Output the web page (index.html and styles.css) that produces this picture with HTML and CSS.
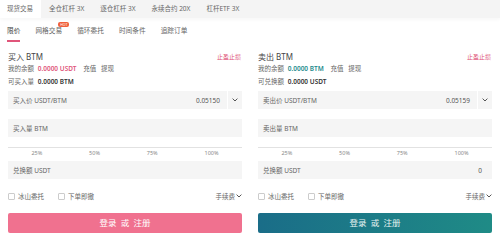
FILE: index.html
```html
<!DOCTYPE html>
<html>
<head>
    <meta charset="utf-8" />
    <title>现货交易</title>
    <link rel="stylesheet" href="styles.css">
</head>
<body>
    <div class="topnav">
        <span class="top_tab active">现货交易</span>
        <span class="top_tab">全仓杠杆 3X</span>
        <span class="top_tab">逐仓杠杆 3X</span>
        <span class="top_tab">永续合约 20X</span>
        <span class="top_tab">杠杆ETF 3X</span>
    </div>
    <div class="subnav">
        <span class="sub_tab active">限价</span>
        <span class="sub_tab">网格交易<i class="hot">HOT</i></span>
        <span class="sub_tab">循环委托</span>
        <span class="sub_tab">时间条件</span>
        <span class="sub_tab">追踪订单</span>
    </div>

    <div class="panels">
        <!-- 买入 -->
        <div class="panel buy">
            <div class="panel_head">
                <span class="title">买入 BTM</span>
                <span class="stop">止盈止损</span>
            </div>
            <div class="row">我的余额 <b class="amount">0.0000 USDT</b> <span class="link">充值</span> <span class="link">提现</span></div>
            <div class="row">可买入量 <b class="dark">0.0000 BTM</b></div>
            <div class="field first">
                <span class="label">买入价 USDT/BTM</span>
                <span class="value">0.05150</span>
                <span class="arrow"><svg width="6" height="4" viewBox="0 0 6 4"><path d="M0.6 0.6 L3 3 L5.4 0.6" fill="none" stroke="#555" stroke-width="1"/></svg></span>
            </div>
            <div class="field">
                <span class="label">买入量 BTM</span>
            </div>
            <div class="slider">
                <div class="line"></div>
                <div class="marks"><span>25%</span><span>50%</span><span>75%</span><span>100%</span></div>
            </div>
            <div class="field total">
                <span class="label">兑换额 USDT</span>
            </div>
            <div class="options">
                <label><i class="box"></i>冰山委托</label>
                <label><i class="box"></i>下单即撤</label>
                <span class="fee">手续费<svg width="6" height="4" viewBox="0 0 6 4"><path d="M0.6 0.6 L3 3 L5.4 0.6" fill="none" stroke="#555" stroke-width="1"/></svg></span>
            </div>
            <div class="btn">登录 或 注册</div>
        </div>

        <!-- 卖出 -->
        <div class="panel sell">
            <div class="panel_head">
                <span class="title">卖出 BTM</span>
                <span class="stop">止盈止损</span>
            </div>
            <div class="row">我的余额 <b class="amount">0.0000 BTM</b> <span class="link">充值</span> <span class="link">提现</span></div>
            <div class="row">可兑换额 <b class="dark">0.0000 USDT</b></div>
            <div class="field first">
                <span class="label">卖出价 USDT/BTM</span>
                <span class="value">0.05159</span>
                <span class="arrow"><svg width="6" height="4" viewBox="0 0 6 4"><path d="M0.6 0.6 L3 3 L5.4 0.6" fill="none" stroke="#555" stroke-width="1"/></svg></span>
            </div>
            <div class="field">
                <span class="label">卖出量 BTM</span>
            </div>
            <div class="slider">
                <div class="line"></div>
                <div class="marks"><span>25%</span><span>50%</span><span>75%</span><span>100%</span></div>
            </div>
            <div class="field total">
                <span class="label">兑换额 USDT</span>
                <span class="value zero">0</span>
            </div>
            <div class="options">
                <label><i class="box"></i>冰山委托</label>
                <label><i class="box"></i>下单即撤</label>
                <span class="fee">手续费<svg width="6" height="4" viewBox="0 0 6 4"><path d="M0.6 0.6 L3 3 L5.4 0.6" fill="none" stroke="#555" stroke-width="1"/></svg></span>
            </div>
            <div class="btn">登录 或 注册</div>
        </div>
    </div>
</body>
</html>
```

FILE: styles.css
```css
* {
    font-family: "Noto Sans", "Noto Sans CJK SC", sans-serif;
    box-sizing: border-box;
}

body {
    margin: 0;
    background: #fff;
    color: #555;
}

.topnav {
    display: flex;
    height: 18px;
    background: #f4f4f4;
    box-shadow: 0 2px 3px rgba(0, 0, 0, 0.03);
}

.top_tab {
    padding: 0 8px 0 8px;
    line-height: 18px;
    font-size: 6.5px;
    color: #666;
}

    .top_tab.active {
        background: #fff;
        padding: 0 8px 0 7px;
    }

.subnav {
    display: flex;
    gap: 15px;
    padding-left: 7px;
}

.sub_tab {
    position: relative;
    padding: 7px 0 3px;
    line-height: 12px;
    font-size: 6.7px;
    color: #666;
    border-bottom: 2px solid transparent;
}

    .sub_tab.active {
        border-bottom-color: #e0557a;
        color: #444;
    }

.hot {
    position: absolute;
    left: 23px;
    top: 4px;
    width: 11px;
    height: 5px;
    border-radius: 2px;
    background: #f0603c;
    color: #fff;
    font-style: normal;
    font-size: 3.5px;
    line-height: 5px;
    text-align: center;
}

.panels {
    display: flex;
    gap: 16px;
    padding: 0 8px;
}

.panel {
    flex: 1;
}

.panel_head {
    display: flex;
    justify-content: space-between;
    align-items: center;
    margin-top: 8px;
    height: 12px;
}

.title {
    font-size: 8px;
    color: #444;
}

.stop {
    font-size: 6px;
    color: #e0557a;
    margin-right: 1px;
}

.row {
    line-height: 13px;
    font-size: 6.5px;
    color: #666;
}

    .row b {
        font-weight: 600;
        margin: 0 2px;
    }

.amount {
    color: #e0557a;
}

.sell .amount {
    color: #1b8a8c;
}

.dark {
    color: #333;
}

.link {
    margin-left: 3px;
}

.field {
    display: flex;
    align-items: center;
    height: 18px;
    margin-top: 10px;
    padding-left: 5px;
    background: #f5f5f5;
    font-size: 6.5px;
    color: #666;
}

    .field.first {
        margin-top: 3px;
    }

    .field.total {
        margin-top: 4px;
    }

.label {
    flex: 1;
}

.value {
    color: #555;
    padding-right: 7px;
}

    .value.zero {
        padding-right: 10px;
    }

.arrow {
    display: flex;
    align-items: center;
    justify-content: center;
    width: 15px;
    height: 18px;
    border-left: 1px solid #fff;
}

.slider {
    margin-top: 10px;
}

.line {
    height: 1px;
    background: #e2e2e2;
}

.marks {
    display: flex;
    justify-content: space-around;
    line-height: 8px;
    font-size: 5.5px;
    color: #888;
    margin-top: 1px;
}

.options {
    display: flex;
    align-items: center;
    margin-top: 10px;
    height: 14px;
    font-size: 6.5px;
    color: #666;
}

    .options label {
        display: flex;
        align-items: center;
        margin-right: 14px;
    }

.box {
    width: 7px;
    height: 7px;
    border: 1px solid #ccc;
    border-radius: 1px;
    margin-right: 3px;
}

.fee {
    margin-left: auto;
    display: flex;
    align-items: center;
    gap: 1px;
}

.btn {
    margin-top: 10px;
    height: 20px;
    line-height: 20px;
    border-radius: 2px;
    text-align: center;
    font-size: 8.5px;
    color: #fff;
    background: #f0718f;
    word-spacing: 2px;
}

.sell .btn {
    background: linear-gradient(90deg, #1a6d88, #1f8b86);
    color: #e8f4f2;
}
```
